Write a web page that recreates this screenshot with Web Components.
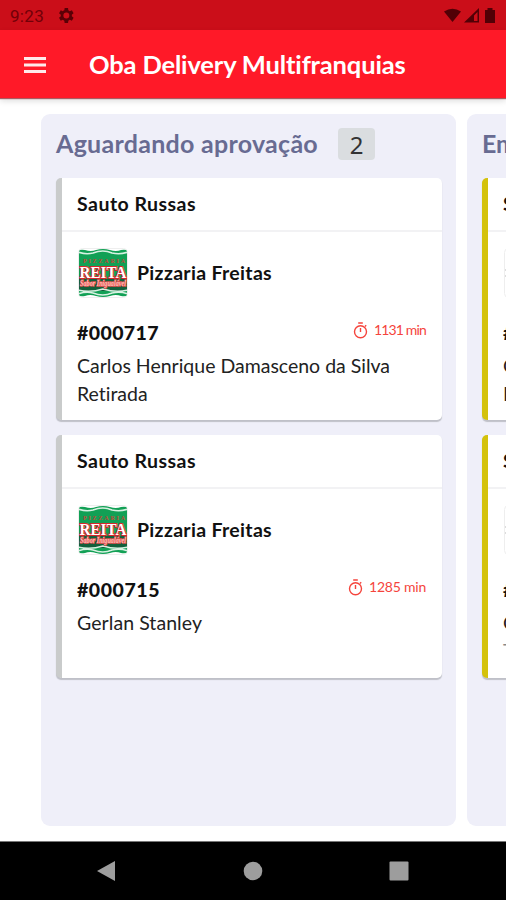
<!DOCTYPE html>
<html lang="pt-BR">
<head>
<meta charset="utf-8">
<title>Oba Delivery Multifranquias</title>
<style>
html,body{margin:0;width:506px;height:900px;overflow:hidden;background:#fff;font-family:Lato,"Open Sans",sans-serif}
</style>
</head>
<body>
<delivery-app></delivery-app>
<script>
const define = (name, html, init) => customElements.define(name, class extends HTMLElement {
  connectedCallback() {
    if (this.shadowRoot) return;
    const root = this.attachShadow({mode: 'open'});
    const t = document.createElement('template');
    t.innerHTML = typeof html === 'function' ? html(this) : html;
    root.append(t.content.cloneNode(true));
    if (init) init(this, root);
  }
});

// One line of text, tracked so that it fills the width given in "w".
define('fit-text', '<style>:host{display:block;white-space:nowrap;width:max-content}span{display:inline-block}</style><span><slot></slot></span>', (el, root) => {
  const w = +el.getAttribute('w');
  if (!w) return;
  const s = root.querySelector('span');
  const n = el.textContent.length;
  s.style.letterSpacing = (w - s.getBoundingClientRect().width) / n + 'px';
});

define('status-bar', `<style>
:host{display:flex;box-sizing:border-box;height:30px;background:#cb0e19;color:#720008;align-items:center;padding:1px 7px 0 10px;font:17px Roboto,sans-serif}
.gear{margin-left:13px}.right{margin-left:auto}
svg{display:block}
</style>
<fit-text w="34">9:23</fit-text>
<svg class="gear" width="17" height="17" viewBox="2 2 20 20" fill="#5a0006"><path fill-rule="evenodd" d="M19.4 13c.1-.7.1-1.300 0-2l2.100-1.600-2-3.500-2.500 1a8 8 0 0 0-1.700-1L15 3.200h-4l-.4 2.700c-.6.200-1.200.6-1.700 1l-2.500-1-2 3.500L6.500 11c-.1.700-.1 1.300 0 2l-2.100 1.600 2 3.500 2.500-1c.5.400 1.100.7 1.700 1l.4 2.700h4l.3-2.700c.6-.2 1.200-.6 1.700-1l2.500 1 2-3.500zM13 8.500a3.500 3.500 0 1 1 0 7 3.500 3.500 0 0 1 0-7z"/></svg>
<svg class="right" width="56" height="18" viewBox="0 0 56 18" fill="#520006"><path d="M1 4.500Q9.500-1 18 4.500L9.500 15z"/><path fill-rule="evenodd" d="M21 15.500 36 1v14.500zM31 14h3.500V5L31 8.500z"/><path d="M42 3h2.500V1h5v2H52v13H42z"/></svg>`);

define('app-bar', `<style>
:host{display:flex;box-sizing:border-box;height:68px;background:#ff1928;color:#fff;align-items:center;padding:2px 0 0 24px;gap:43px;box-shadow:0 1px 1px #a95b62,0 3px 6px #0002;position:relative;font-weight:700;font-size:25.500px}
svg{display:block}fit-text{margin-top:-2px}
</style>
<svg width="22" height="16" viewBox="0 0 22 16" fill="#ffe9ea"><path d="M0 0h22v3H0zM0 6.500h22v3H0zM0 13h22v3H0z"/></svg>
<fit-text w="317">Oba Delivery Multifranquias</fit-text>`);

define('store-logo', el => `<style>:host{display:block;width:50px;height:50px;flex:none}svg{display:block}</style>
<svg width="50" height="50" viewBox="0 0 50 50"><defs><clipPath id="c"><path d="M1 3Q2 1 7 2q6 2 11 0 7-2 14 0 6 2 11 0 5-1 6 1v44q-1 2-6 1-5-2-11 0-7 2-14 0-6-2-11 0-5 1-6-1z"/></clipPath></defs>
<rect x=".5" y=".5" width="49" height="49" rx="4" fill="#fff" stroke="#eee"/>
${el.hasAttribute('blank') ? '<path d="M1 22h2M1 28h2" stroke="#bbb"/>' : `<g clip-path="url(#c)"><path fill="#12a055" d="M0 0h50v50H0z"/>
<path fill="none" stroke="#d8f1e2" stroke-width="1.600" d="M0 4q8 3 15 1 10-4 19 0 8 2 16-1"/>
<path fill="#12603b" d="M0 31h50v12H0z"/>
<path fill="none" stroke="#d8f1e2" stroke-width="1.500" d="M0 42q12 3 25-1 13 4 25 1M0 46q8-3 15-1 10 4 19 0 8-2 16 1"/>
<g text-anchor="middle" font-family="Liberation Serif,serif" font-weight="700">
<text x="26" y="14.500" font-size="6" fill="#c04a3a" textLength="42">PIZZARIA</text>
<text x="25" y="29.500" font-size="17" fill="#fff" stroke="#d5282d" stroke-width="2" paint-order="stroke" textLength="47" lengthAdjust="spacingAndGlyphs">REITA</text>
<text x="25" y="38" font-size="8" font-style="italic" fill="#ffc0b8" stroke="#e04f50" stroke-width="1.500" paint-order="stroke" textLength="46" lengthAdjust="spacingAndGlyphs">Sabor Inigualável</text></g></g>`}</svg>`);

define('timer-label', `<style>
:host{display:flex;align-items:center;gap:6px;color:#f5443c;font-size:14px;line-height:18px}svg{display:block}slot{display:block;margin-top:-1px}
</style><svg width="15" height="17" viewBox="0 0 15 17" fill="none" stroke="currentColor" stroke-width="1.400"><circle cx="7.500" cy="9.700" r="6"/><path d="M5.200 1h4.600M7.500 6v4M12 4.500l1.200-1.200"/></svg><slot></slot>`);

define('order-card', el => `<style>
:host{display:block;box-sizing:border-box;width:386px;height:var(--h);background:#fff;border-left:6px solid var(--edge);border-radius:5px;box-shadow:0 1.500px 1px #bfc0c8;color:#111}
header{box-sizing:border-box;height:54px;border-bottom:2px solid #f2f2f4;padding:13px 15px;line-height:26px;font-weight:700;font-size:19.500px}
main{padding:16px 16px 0 15px}
.store{display:flex;align-items:center;gap:9px;height:50px;padding-left:1px;font-weight:700;font-size:19.500px}
.store slot{display:block;margin-top:-2px}
.row{display:flex;justify-content:space-between;align-items:center;height:28px;margin-top:20px;font-size:19.500px;font-weight:900}
.row timer-label{font-weight:400;margin-top:-3px}
.text{font-size:19.500px;line-height:28px;margin-top:6px}
</style>
<header><slot name="city"></slot></header><main><div class="store"><store-logo ${el.hasAttribute('blank') ? 'blank' : ''}></store-logo><slot name="store"></slot></div>
<div class="row"><slot name="id"></slot>${el.hasAttribute('blank') ? '' : '<timer-label><slot name="time"></slot></timer-label>'}</div><div class="text"><slot></slot></div></main>`);

define('board-column', `<style>
:host{display:flex;flex-direction:column;gap:15px;box-sizing:border-box;flex:none;width:415px;height:712px;background:#efeff9;border-radius:9px;padding:14px 14px 0 15px}
header{display:flex;align-items:center;gap:20px;height:32px;margin-bottom:3px;color:#686b92;font-weight:700;font-size:25px}
.count{display:flex;align-items:center;justify-content:center;width:37px;height:32px;border-radius:4px;background:#dadde0;color:#333;font:400 24px "Noto Sans",sans-serif}
.title{margin-top:-2px}
</style><header><div class="title"><slot name="title"></slot></div><div class="count"><slot name="count"></slot></div></header><slot></slot>`);

define('nav-bar', `<style>
:host{display:flex;box-sizing:border-box;height:59px;background:#000;border-top:1px solid #777;justify-content:space-between;align-items:center;padding:0 97px 0 96px}svg{display:block}
</style>
<svg width="20" height="22" fill="#9d9d9d"><path d="M1 11 19 1v20z"/></svg>
<svg width="20" height="20" fill="#9d9d9d"><circle cx="10" cy="10" r="9.300"/></svg>
<svg width="20" height="20" fill="#9d9d9d"><rect x=".5" y=".5" width="19" height="19" rx="1"/></svg>`);

const card = (h, edge, id, idW, time, timeW, lines) => `<order-card ${time ? '' : 'blank'} style="--h:${h}px;--edge:${edge}">
<fit-text slot="city" w="119">Sauto Russas</fit-text>${time ? '<fit-text slot="store" w="135">Pizzaria Freitas</fit-text>' : ''}
<fit-text slot="id" w="${idW}">${id}</fit-text>${time ? `<fit-text slot="time" w="${timeW}">${time}</fit-text>` : ''}
${lines.map(([t, w, c]) => `<fit-text w="${w}" style="color:${c || '#222'}">${t}</fit-text>`).join('')}</order-card>`;

define('delivery-app', `<style>
:host{display:flex;flex-direction:column;width:506px;height:900px;overflow:hidden;background:#fff}
.board{display:flex;gap:11px;flex:1;padding:16px 0 0 41px;overflow:hidden}
</style><status-bar></status-bar><app-bar></app-bar>
<div class="board">
<board-column><fit-text slot="title" w="262">Aguardando aprovação</fit-text><span slot="count">2</span>
${card(242, '#c9cbcb', '#000717', 82, '1131 min', 52, [['Carlos Henrique Damasceno da Silva', 313], ['Retirada', 71]])}
${card(243, '#c9cbcb', '#000715', 83, '1285 min', 57, [['Gerlan Stanley', 125]])}
</board-column>
<board-column><fit-text slot="title">Em</fit-text><span slot="count"></span>
${card(242, '#d4c20c', '#', 0, '', 0, [['C', 0], ['R', 0]])}
${card(243, '#d4c20c', '#', 0, '', 0, [['C', 0], ['T', 0, '#888']])}
</board-column>
</div><nav-bar></nav-bar>`);
</script>
</body>
</html>
